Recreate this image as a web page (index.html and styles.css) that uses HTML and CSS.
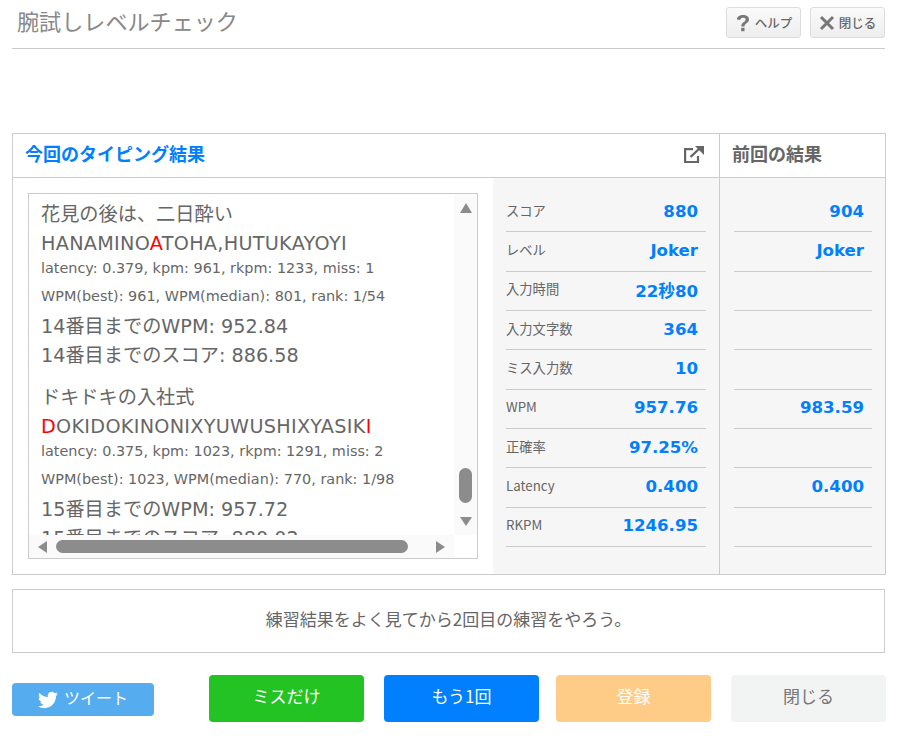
FILE: index.html
```html
<!DOCTYPE html>
<html lang="ja">
<head>
<meta charset="utf-8">
<title>腕試しレベルチェック</title>
<link rel="stylesheet" href="styles.css">
</head>
<body>
<header class="top">
  <h1 class="title">腕試しレベルチェック</h1>
  <div class="top-buttons">
    <button class="mini"><svg class="mini-ico" viewBox="0 0 16 18"><path d="M2 5.500C2 2.500 4.500 1 8 1s6 1.600 6 4.400c0 3.800-4.500 3.500-4.500 7H6.300c0-4.400 4.400-4.300 4.400-6.900 0-1.100-1-1.700-2.700-1.700S5.300 4.500 5.200 6z" fill="#777"/><rect x="6.200" y="13.800" width="3.300" height="3.400" fill="#777"/></svg>ヘルプ</button>
    <button class="mini"><svg class="mini-ico" viewBox="0 0 16 18"><path d="M2 3l12 12M14 3L2 15" stroke="#777" stroke-width="3" fill="none"/></svg>閉じる</button>
  </div>
</header>

<section class="panel">
  <div class="current">
    <div class="panel-head">
      <h2 class="head-blue">今回のタイピング結果</h2>
      <svg class="ext" viewBox="0 0 20 20"><path d="M9 3.200H1.100V16H14v-6" fill="none" stroke="#666" stroke-width="2.200"/><path d="M6.500 11L16 2" fill="none" stroke="#666" stroke-width="2.400"/><path d="M11 0h9v9z" fill="#666"/></svg>
    </div>
    <div class="current-body">
      <div class="log-wrap">
        <div class="log">
          <div class="log-text">
            <p class="big">花見の後は、二日酔い</p>
            <p class="big typed">HANAMINO<span class="miss">A</span>TOHA,HUTUKAYOYI</p>
            <p class="small first">latency: 0.379, kpm: 961, rkpm: 1233, miss: 1</p>
            <p class="small">WPM(best): 961, WPM(median): 801, rank: 1/54</p>
            <p class="big sum">14番目までのWPM: 952.84</p>
            <p class="big">14番目までのスコア: 886.58</p>
            <p class="big gap">ドキドキの入社式</p>
            <p class="big typed"><span class="miss">D</span>OKIDOKINONIXYUWUSHIXYASIK<span class="miss">I</span></p>
            <p class="small first">latency: 0.375, kpm: 1023, rkpm: 1291, miss: 2</p>
            <p class="small">WPM(best): 1023, WPM(median): 770, rank: 1/98</p>
            <p class="big sum">15番目までのWPM: 957.72</p>
            <p class="big">15番目までのスコア: 880.02</p>
          </div>
          <div class="vbar">
            <span class="arrow up"></span>
            <span class="vthumb"></span>
            <span class="arrow down"></span>
          </div>
          <div class="hbar">
            <span class="arrow left"></span>
            <span class="hthumb"></span>
            <span class="arrow right"></span>
          </div>
          <div class="corner"></div>
        </div>
      </div>
      <dl class="stats">
        <div class="row"><dt>スコア</dt><dd>880</dd></div>
        <div class="row"><dt>レベル</dt><dd>Joker</dd></div>
        <div class="row"><dt>入力時間</dt><dd>22秒80</dd></div>
        <div class="row"><dt>入力文字数</dt><dd>364</dd></div>
        <div class="row"><dt>ミス入力数</dt><dd>10</dd></div>
        <div class="row"><dt>WPM</dt><dd>957.76</dd></div>
        <div class="row"><dt>正確率</dt><dd>97.25%</dd></div>
        <div class="row"><dt>Latency</dt><dd>0.400</dd></div>
        <div class="row"><dt>RKPM</dt><dd>1246.95</dd></div>
      </dl>
    </div>
  </div>
  <div class="previous">
    <div class="panel-head"><h2 class="head-gray">前回の結果</h2></div>
    <dl class="stats prev-stats">
      <div class="row"><dd>904</dd></div>
      <div class="row"><dd>Joker</dd></div>
      <div class="row"><dd></dd></div>
      <div class="row"><dd></dd></div>
      <div class="row"><dd></dd></div>
      <div class="row"><dd>983.59</dd></div>
      <div class="row"><dd></dd></div>
      <div class="row"><dd>0.400</dd></div>
      <div class="row"><dd></dd></div>
    </dl>
  </div>
</section>

<div class="message">練習結果をよく見てから2回目の練習をやろう。</div>

<footer class="actions">
  <button class="tweet"><svg class="bird" viewBox="0 0 24 24"><path fill="#fff" d="M23.950 4.570a10 10 0 0 1-2.820.770 4.960 4.960 0 0 0 2.160-2.720c-.95.550-2 .950-3.130 1.180a4.920 4.920 0 0 0-8.380 4.480C7.690 8.100 4.070 6.130 1.640 3.160a4.820 4.820 0 0 0-.67 2.480c0 1.710.87 3.210 2.190 4.100a4.900 4.900 0 0 1-2.230-.62v.06a4.920 4.920 0 0 0 3.950 4.830 5 5 0 0 1-2.210.08 4.940 4.940 0 0 0 4.600 3.420A9.870 9.870 0 0 1 0 19.540a14 14 0 0 0 7.560 2.210c9.050 0 14-7.500 14-13.980 0-.21 0-.42-.02-.63a9.940 9.940 0 0 0 2.410-2.570z"/></svg><span class="tweet-label">ツイート</span></button>
  <button class="act green">ミスだけ</button>
  <button class="act blue">もう1回</button>
  <button class="act orange">登録</button>
  <button class="act gray">閉じる</button>
</footer>
</body>
</html>
```

FILE: styles.css
```css
* { box-sizing: border-box; }
html, body { margin: 0; padding: 0; }
body {
  width: 897px;
  height: 748px;
  overflow: hidden;
  background: #fff;
  color: #666;
  font-family: "DejaVu Sans", "Noto Sans CJK JP", sans-serif;
  padding: 0 12px;
}
button { font-family: inherit; cursor: pointer; }
h1, h2, p, dl, dd { margin: 0; }

.top {
  height: 49px;
  border-bottom: 1px solid #ccc;
  display: flex;
  justify-content: space-between;
  align-items: flex-start;
  width: 873px;
}
.title {
  font-family: "Noto Sans CJK JP", sans-serif;
  font-weight: 400;
  font-size: 22.100px;
  line-height: 40px;
  color: #888;
  padding-left: 5px;
}
.top-buttons { display: flex; gap: 9px; padding-top: 7px; }
.mini {
  width: 75px;
  height: 31px;
  border: 1px solid #ddd;
  border-radius: 3px;
  background: linear-gradient(#fafafa, #eee);
  color: #666;
  font-family: "Noto Sans CJK JP", sans-serif;
  font-size: 12.500px;
  font-weight: 500;
  display: flex;
  align-items: center;
  justify-content: center;
  gap: 4px;
  padding: 0;
}
.mini-ico { width: 16px; height: 18px; }

.panel {
  margin-top: 84px;
  width: 874px;
  height: 442px;
  border: 1px solid #ccc;
  display: flex;
}
.current { width: 707px; border-right: 1px solid #ccc; display: flex; flex-direction: column; }
.previous { flex: 1; display: flex; flex-direction: column; background: #f6f6f6; }
.panel-head {
  height: 44px;
  background: #fff;
  border-bottom: 1px solid #ccc;
  flex: none;
  display: flex;
  align-items: center;
  justify-content: space-between;
}
.head-blue, .head-gray {
  font-family: "Noto Sans CJK JP", sans-serif;
  font-size: 18px;
  font-weight: 700;
  line-height: 38px;
  margin-bottom: 5px;
}
.head-blue { color: #0080ff; padding-left: 12px; }
.head-gray { color: #666; padding-left: 12px; }
.ext { width: 20px; height: 20px; margin-right: 15px; }

.current-body { flex: 1; display: flex; min-height: 0; }
.log-wrap { width: 480px; padding: 15px 0 15px 15px; background: #fff; }
.log {
  width: 450px;
  height: 366px;
  border: 1px solid #ccc;
  display: grid;
  grid-template-columns: 1fr 23px;
  grid-template-rows: 1fr 23px;
}
.log-text {
  overflow: hidden;
  padding: 7px 0 0 12px;
  white-space: nowrap;
  min-width: 0;
  min-height: 0;
}
.big {
  font-size: 19.200px;
  line-height: 28.500px;
  height: 28.500px;
}
.typed { letter-spacing: .3px; }
.small {
  font-size: 14.400px;
  line-height: 28px;
  height: 28px;
}
.first { margin-top: -4px; }
.sum { margin-top: 3px; }
.gap { margin-top: 14px; }
.miss { color: #f00; }

.vbar {
  background: #fafafa;
  display: flex;
  flex-direction: column;
  align-items: center;
  padding: 9px 0 9px;
}
.vthumb { width: 13px; height: 35px; border-radius: 7px; background: #8c8c8c; margin-top: auto; margin-bottom: 14px; }
.hbar {
  background: #fafafa;
  display: flex;
  align-items: center;
  padding: 0 9px 0 9px;
}
.hthumb { width: 352px; height: 13px; border-radius: 7px; background: #8c8c8c; margin-left: 9px; margin-right: auto; }
.corner { background: #fff; }
.arrow { display: block; width: 0; height: 0; flex: none; }
.up { border-left: 6px solid transparent; border-right: 6px solid transparent; border-bottom: 10px solid #8c8c8c; }
.down { border-left: 6px solid transparent; border-right: 6px solid transparent; border-top: 9px solid #8c8c8c; }
.left { border-top: 6px solid transparent; border-bottom: 6px solid transparent; border-right: 9px solid #8c8c8c; }
.right { border-top: 6px solid transparent; border-bottom: 6px solid transparent; border-left: 9px solid #8c8c8c; }

.stats {
  flex: 1;
  background: #f6f6f6;
  padding: 15px 13px 0;
}
.row {
  height: 39.330px;
  border-bottom: 1px solid #ccc;
  display: flex;
  justify-content: space-between;
  align-items: center;
  padding: 0 8px 2px 0;
}
.stats dt {
  font-size: 13.300px;
  color: #666;
  font-family: "Noto Sans CJK JP", sans-serif;
  margin-bottom: 2px;
}
.stats dd {
  margin-left: auto;
  font-size: 16.600px;
  font-weight: 700;
  color: #0080ff;
}
.prev-stats { padding: 15px 13px 0 14px; }

.message {
  width: 873px;
  height: 64px;
  margin-top: 14px;
  padding-bottom: 6px;
  border: 1px solid #ccc;
  display: flex;
  align-items: center;
  justify-content: center;
  font-family: "Noto Sans CJK JP", sans-serif;
  font-size: 17px;
  color: #666;
}

.actions {
  display: flex;
  align-items: flex-start;
  margin-top: 22px;
  height: 47px;
  width: 874px;
}
.tweet {
  flex: none;
  width: 142px;
  height: 33px;
  margin-top: 8px;
  border: 0;
  border-radius: 4px;
  background: #55acee;
  color: #fff;
  font-family: "Noto Sans CJK JP", sans-serif;
  font-size: 16px;
  display: flex;
  align-items: center;
  justify-content: center;
  gap: 6px;
  padding: 0;
  margin-right: 55px;
}
.tweet-label { margin-bottom: 6px; }
.bird { width: 20px; height: 20px; }
.act {
  flex: none;
  width: 155px;
  height: 47px;
  border: 0;
  border-radius: 4px;
  color: #fff;
  font-family: "Noto Sans CJK JP", sans-serif;
  font-size: 17px;
  padding: 0 0 7px;
}
.green { background: #22c322; margin-right: 20px; }
.blue { background: #0080ff; margin-right: 17px; }
.orange { background: #fc8; margin-right: 20px; }
.gray { background: #f2f4f4; color: #777; }
```
